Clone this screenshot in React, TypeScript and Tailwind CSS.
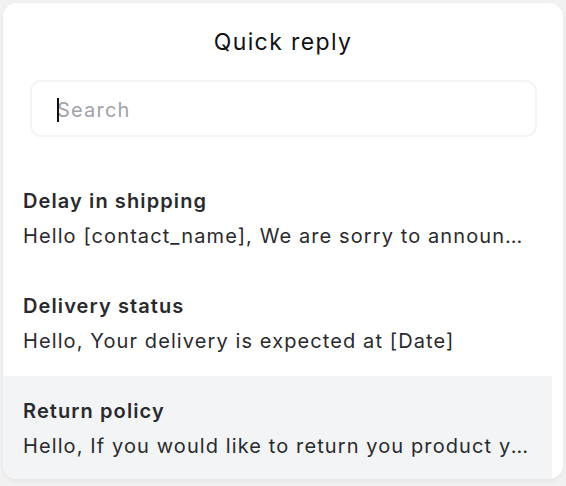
import React from "react";

const items = [
  { title: "Delay in shipping", body: "Hello [contact_name], We are sorry to announce that your shipment has been delayed" },
  { title: "Delivery status", body: "Hello, Your delivery is expected at [Date]" },
  { title: "Return policy", body: "Hello, If you would like to return you product you can do so within 30 days" },
];

export default function App() {
  return (
    <div className="w-[566px] h-[486px] bg-[#f1f1f1] pt-[3px] pl-[3px]" style={{ fontFamily: "Inter, 'Noto Sans', sans-serif" }}>
      <div className="w-[560px] h-[476px] bg-white rounded-[14px] overflow-hidden shadow-[0_2px_4px_rgba(0,0,0,0.06)] flex flex-col">
        <div className="shrink-0 pt-[25px] text-center text-[23px] leading-[28px] text-[#111111] font-normal tracking-[0.06em]">Quick reply</div>
        <div className="shrink-0 mt-[24px] ml-[27px] w-[507px] h-[57px] rounded-[11px] border-2 border-[#f3f4f6] flex items-center pl-[25px] relative">
          <input
            className="w-full outline-none pt-[3px] text-[20px] tracking-[0.06em] text-[#27272a] placeholder:text-[#a1a1aa] bg-transparent"
            placeholder="Search"
          />
          <div className="absolute left-[25px] top-[16px] w-[2px] h-[24px] bg-[#111111]" />
        </div>
        <div className="shrink-0 mt-[29px] w-[549px] flex flex-col">
          {items.map((it, i) => (
            <div key={i} className={`shrink-0 px-[20px] py-[21px] ${i === 2 ? "bg-[#f3f4f6]" : ""}`}>
              <div className="text-[20px] leading-[28px] font-semibold text-[#2a2a2e] tracking-[0.055em]">{it.title}</div>
              <div className="mt-[7px] text-[20px] leading-[28px] text-[#2a2a2e] tracking-[0.055em] truncate">{it.body}</div>
            </div>
          ))}
        </div>
      </div>
    </div>
  );
}
